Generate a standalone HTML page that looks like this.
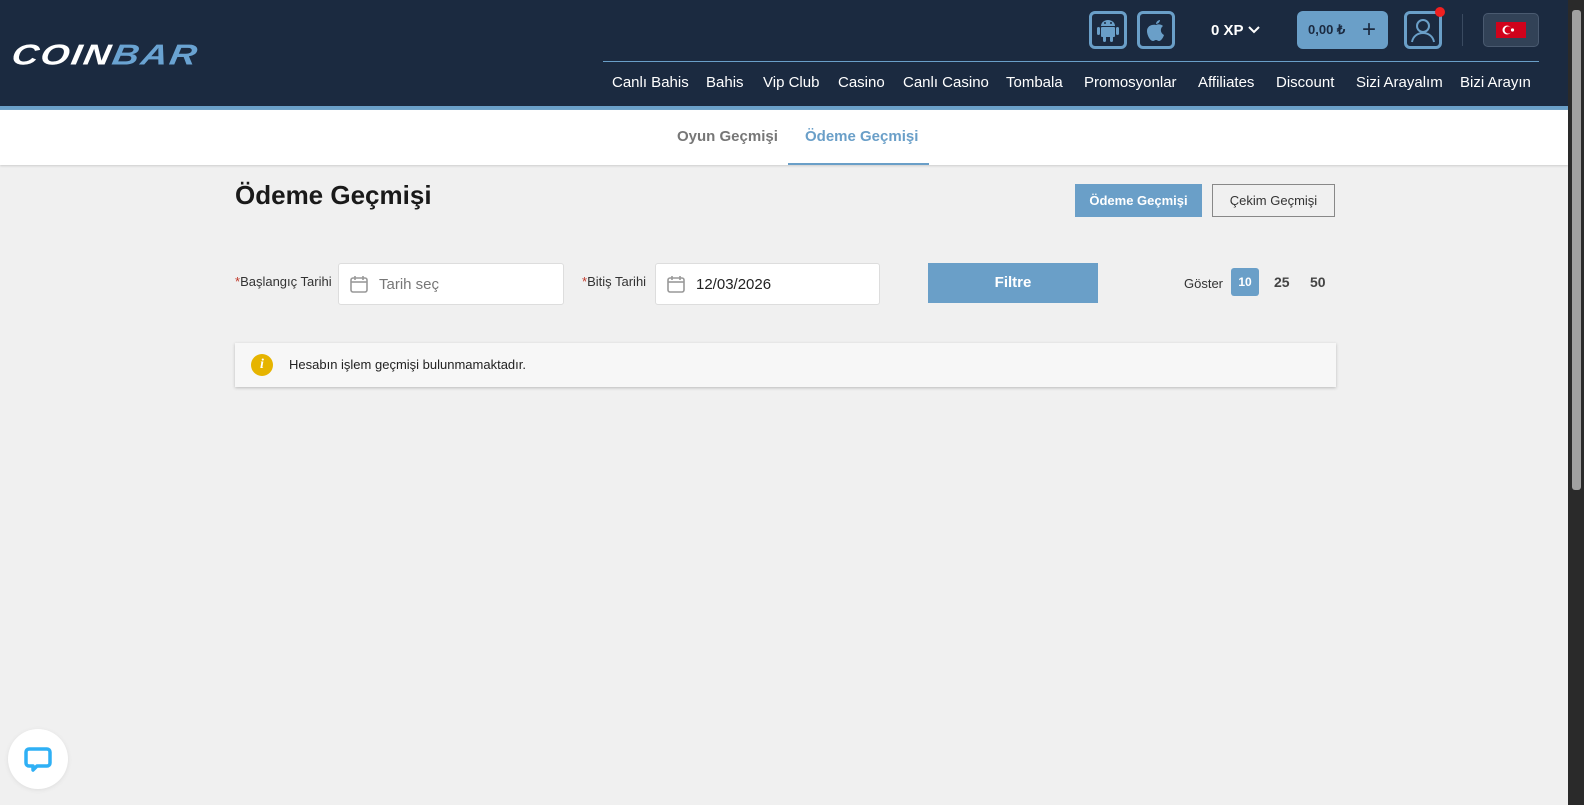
<!DOCTYPE html>
<html><head><meta charset="utf-8"><style>
*{box-sizing:border-box;margin:0;padding:0}
body{width:1584px;height:805px;overflow:hidden;background:#f0f0f0;font-family:"Liberation Sans",sans-serif;position:relative}
.hdr{position:absolute;left:0;top:0;width:1568px;height:106px;background:#1b2a40}
.hline{position:absolute;left:0;top:106px;width:1568px;height:4px;background:#6a9fc8}
.logo{position:absolute;left:12px;top:34px;font-size:37px;font-weight:bold;font-style:italic;letter-spacing:2px;color:#fff;transform:skewX(-10deg) scaleY(0.78);transform-origin:left center}
.logo span{color:#6aa3d2}
.ib{position:absolute;top:11px;width:38px;height:38px;border:3px solid #6a9fc8;border-radius:6px}
.nav{position:absolute;top:74px;font-size:15px;color:#fff}
.sep{position:absolute;left:603px;top:61px;width:936px;height:1px;background:#6a9fc8}
.tabs{position:absolute;left:0;top:110px;width:1568px;height:55px;background:#fff;box-shadow:0 1px 2px #ccc}
.tab{position:absolute;top:18px;font-size:15px;font-weight:bold;color:#777}
.sb{position:absolute;left:1568px;top:0;width:16px;height:805px;background:#2a2a2a}
.thumb{position:absolute;left:1572px;top:10px;width:9px;height:480px;background:#a0a0a0;border-radius:3px}
.lbl{position:absolute;top:274px;font-size:13px;color:#333}
.lbl b{color:#c0392b;font-weight:normal}
.inp{position:absolute;top:263px;height:42px;background:#fff;border:1px solid #ddd;border-radius:3px;font-size:15px;padding:12px 0 0 40px;color:#777}
.cal{position:absolute;left:10px;top:10px}
</style></head><body>
<div class="hdr"></div><div class="hline"></div>
<div class="logo">COIN<span>BAR</span></div>
<div class="ib" style="left:1089px"><svg width="32" height="32" viewBox="0 0 32 32"><g fill="#6a9fc8"><rect x="9" y="13" width="14" height="10" rx="1"/><path d="M9 12a7 6 0 0 1 14 0z"/><rect x="5" y="13" width="3" height="8" rx="1.5"/><rect x="24" y="13" width="3" height="8" rx="1.5"/><rect x="11" y="22" width="3" height="6" rx="1.5"/><rect x="18" y="22" width="3" height="6" rx="1.5"/></g><circle cx="13" cy="9" r="1" fill="#1b2a40"/><circle cx="19" cy="9" r="1" fill="#1b2a40"/></svg></div>
<div class="ib" style="left:1137px"><svg width="32" height="32" viewBox="0 0 32 32"><path fill="#6a9fc8" d="M16 11c2-1 5-1 7 1-3 2-3 7 1 9-1 3-3 6-5 6-1 0-2-1-3-1s-2 1-3 1c-3 0-6-6-6-10 0-5 5-7 9-6zM16 10c0-2 2-4 4-4 0 2-2 4-4 4z"/></svg></div>
<div style="position:absolute;left:1211px;top:22px;color:#fff;font-weight:bold;font-size:15px">0 XP <svg width="14" height="10" viewBox="0 0 14 10"><path d="M2 2l5 5 5-5" stroke="#fff" stroke-width="2" fill="none"/></svg></div>
<div style="position:absolute;left:1297px;top:11px;width:91px;height:38px;background:#6a9fc8;border-radius:6px;font-size:13px;font-weight:bold;color:#1b2a40;padding:11px 0 0 11px">0,00 ₺<span style="position:absolute;left:65px;top:5px;font-size:24px;font-weight:normal">+</span></div>
<div class="ib" style="left:1404px"><svg width="32" height="32" viewBox="0 0 32 32"><circle cx="16" cy="12" r="6" stroke="#6a9fc8" stroke-width="2" fill="none"/><path d="M5 28c1-6 6-9 11-9s10 3 11 9" stroke="#6a9fc8" stroke-width="2" fill="none"/></svg></div>
<div style="position:absolute;left:1435px;top:7px;width:10px;height:10px;border-radius:50%;background:#f02020"></div>
<div style="position:absolute;left:1462px;top:14px;width:1px;height:32px;background:#3a4a60"></div>
<div style="position:absolute;left:1483px;top:13px;width:56px;height:34px;background:#324257;border-radius:5px;border:1px solid #4a5a70"><svg style="position:absolute;left:12px;top:8px" width="30" height="16" viewBox="0 0 30 16"><rect width="30" height="16" fill="#d0021b"/><circle cx="11" cy="8" r="4.5" fill="#fff"/><circle cx="12.2" cy="8" r="3.6" fill="#d0021b"/><circle cx="16.5" cy="8" r="1.6" fill="#fff"/></svg></div>
<div class="sep"></div>
<div class="nav" style="left:612px">Canlı Bahis</div>
<div class="nav" style="left:706px">Bahis</div>
<div class="nav" style="left:763px">Vip Club</div>
<div class="nav" style="left:838px">Casino</div>
<div class="nav" style="left:903px">Canlı Casino</div>
<div class="nav" style="left:1006px">Tombala</div>
<div class="nav" style="left:1084px">Promosyonlar</div>
<div class="nav" style="left:1198px">Affiliates</div>
<div class="nav" style="left:1276px">Discount</div>
<div class="nav" style="left:1356px">Sizi Arayalım</div>
<div class="nav" style="left:1460px">Bizi Arayın</div>
<div class="tabs"><div class="tab" style="left:677px">Oyun Geçmişi</div><div class="tab" style="left:805px;color:#6a9fc8">Ödeme Geçmişi</div><div style="position:absolute;left:788px;top:53px;width:141px;height:2px;background:#6a9fc8"></div></div>
<div style="position:absolute;left:235px;top:180px;font-size:26px;font-weight:bold;color:#1a1a1a">Ödeme Geçmişi</div>
<div style="position:absolute;left:1075px;top:184px;width:127px;height:33px;background:#6a9fc8;color:#fff;font-size:13px;font-weight:bold;text-align:center;line-height:33px">Ödeme Geçmişi</div>
<div style="position:absolute;left:1212px;top:184px;width:123px;height:33px;border:1px solid #888;color:#333;font-size:13px;text-align:center;line-height:31px">Çekim Geçmişi</div>
<div class="lbl" style="left:235px"><b>*</b>Başlangıç Tarihi</div>
<div class="inp" style="left:338px;width:226px"><svg class="cal" width="20" height="20" viewBox="0 0 20 20"><rect x="2" y="4" width="16" height="14" rx="2" fill="none" stroke="#999" stroke-width="1.6"/><path d="M2 8h16" stroke="#999" stroke-width="1.6"/><path d="M6 2v4M14 2v4" stroke="#999" stroke-width="1.6"/></svg>Tarih seç</div>
<div class="lbl" style="left:582px"><b>*</b>Bitiş Tarihi</div>
<div class="inp" style="left:655px;width:225px;color:#222"><svg class="cal" width="20" height="20" viewBox="0 0 20 20"><rect x="2" y="4" width="16" height="14" rx="2" fill="none" stroke="#999" stroke-width="1.6"/><path d="M2 8h16" stroke="#999" stroke-width="1.6"/><path d="M6 2v4M14 2v4" stroke="#999" stroke-width="1.6"/></svg>12/03/2026</div>
<div style="position:absolute;left:928px;top:263px;width:170px;height:40px;background:#6a9fc8;color:#fff;font-weight:bold;font-size:15px;text-align:center;line-height:40px">Filtre</div>
<div style="position:absolute;left:1184px;top:276px;font-size:13px;color:#333">Göster</div>
<div style="position:absolute;left:1231px;top:268px;width:28px;height:28px;background:#6a9fc8;border-radius:3px;color:#fff;font-size:12px;font-weight:bold;text-align:center;line-height:28px">10</div>
<div style="position:absolute;left:1274px;top:274px;font-size:14px;font-weight:bold;color:#444">25</div>
<div style="position:absolute;left:1310px;top:274px;font-size:14px;font-weight:bold;color:#444">50</div>
<div style="position:absolute;left:235px;top:343px;width:1101px;height:44px;background:#f7f7f7;box-shadow:0 1px 3px #bbb"><div style="position:absolute;left:16px;top:11px;width:22px;height:22px;border-radius:50%;background:#e6b400;color:#fff;font-weight:bold;font-style:italic;font-size:14px;text-align:center;line-height:22px;font-family:'Liberation Serif',serif">i</div><div style="position:absolute;left:54px;top:14px;font-size:13px;color:#222">Hesabın işlem geçmişi bulunmamaktadır.</div></div>
<div style="position:absolute;left:8px;top:729px;width:60px;height:60px;border-radius:50%;background:#fff;box-shadow:0 1px 4px #ddd"><svg style="position:absolute;left:16px;top:18px" width="28" height="26" viewBox="0 0 28 26"><path d="M5 2h18a3 3 0 0 1 3 3v11a3 3 0 0 1-3 3H13l-4 4v-4H5a3 3 0 0 1-3-3V5a3 3 0 0 1 3-3z" fill="none" stroke="#2fb0f5" stroke-width="3.5" stroke-linejoin="round"/></svg></div>
<div class="sb"></div><div class="thumb"></div>
</body></html>
